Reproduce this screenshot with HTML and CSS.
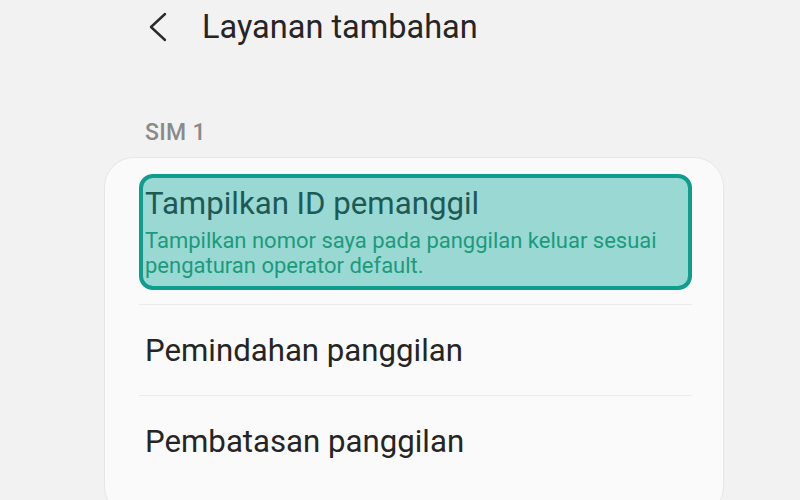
FILE: index.html
```html
<!DOCTYPE html>
<html lang="id">
<head>
<meta charset="utf-8">
<link rel="stylesheet" href="styles.css">
</head>
<body>
<header class="appbar">
  <span class="back" aria-label="Kembali">
    <svg width="20" height="30" viewBox="0 0 20 30"><path d="M18 2 L4 15 L18 28" fill="none" stroke="#2a2a2a" stroke-width="2.4" stroke-linecap="round" stroke-linejoin="round"/></svg>
  </span>
  <h1 class="title">Layanan tambahan</h1>
</header>
<div class="section-label">SIM 1</div>
<section class="card">
  <div class="item item-highlight">
    <div class="item-title">Tampilkan ID pemanggil</div>
    <div class="item-sub">Tampilkan nomor saya pada panggilan keluar sesuai pengaturan operator default.</div>
  </div>
  <div class="divider"></div>
  <div class="item item-plain"><div class="item-title">Pemindahan panggilan</div></div>
  <div class="divider"></div>
  <div class="item item-plain"><div class="item-title">Pembatasan panggilan</div></div>
</section>
</body>
</html>
```
FILE: styles.css
```css
html, body {
  margin: 0;
  padding: 0;
}
body {
  width: 800px;
  height: 500px;
  overflow: hidden;
  background: #f2f2f2;
  font-family: Roboto, "Noto Sans", sans-serif;
  color: #222;
}
.appbar {
  display: flex;
  align-items: center;
  height: 54px;
  padding-left: 147px;
}
.back {
  display: flex;
  width: 55px;
}
.title {
  margin: 0;
  font-size: 32.5px;
  font-weight: 400;
  color: #252525;
  letter-spacing: 0;
}
.section-label {
  margin: 67px 0 0 145px;
  font-size: 23px;
  font-weight: 500;
  color: #8a8a8a;
  line-height: 24px;
  letter-spacing: 0.3px;
}
.card {
  margin: 12px 0 0 104px;
  width: 620px;
  height: 360px;
  background: #fafafa;
  border: 1px solid #e6e6e6;
  border-radius: 30px;
  padding: 16px 31px 0 34px;
  box-sizing: border-box;
}
.item-highlight {
  height: 116px;
  box-sizing: border-box;
  border: 4px solid #0f9d8d;
  border-radius: 14px;
  background: #9ad8d3;
  padding: 7px 6px 0 2px;
}
.item-highlight .item-title {
  color: #1e5a55;
  font-size: 31.2px;
  line-height: 38px;
}
.item-sub {
  font-size: 22px;
  line-height: 25px;
  color: #1b9b7c;
  margin-top: 5px;
}
.divider {
  height: 1px;
  background: #ebebeb;
  margin-top: 14px;
}
.item-plain {
  height: 90px;
  display: flex;
  align-items: center;
  padding-left: 6px;
}
.item-plain + .divider {
  margin-top: 0;
}
.item-title {
  font-size: 31.2px;
  color: #252525;
}
```
